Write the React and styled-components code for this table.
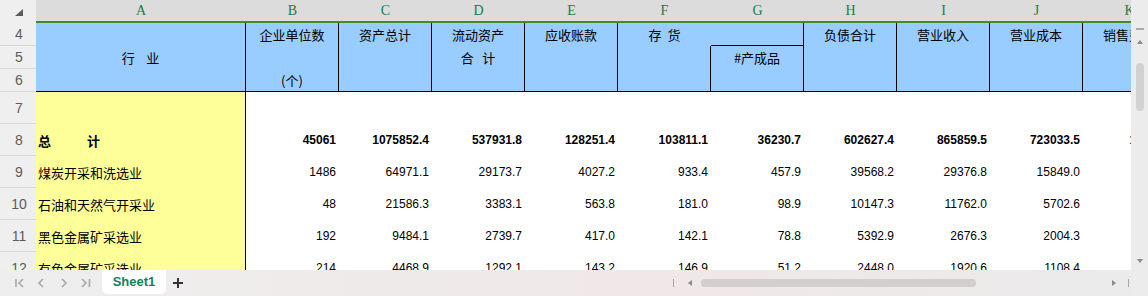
import styled, { createGlobalStyle } from "styled-components";

const GlobalStyle = createGlobalStyle`
  html, body {
    margin: 0;
    padding: 0;
  }
  body {
    background: #fff;
    font-family: "Liberation Sans", "Noto Sans CJK SC", sans-serif;
  }
`;

const LETTERS = ["A", "B", "C", "D", "E", "F", "G", "H", "I", "J", "K"];

// 表头：每个合并单元格按三行文字排列
const HEADS_LEFT = [
  ["企业单位数", "", "(个)"],
  ["资产总计", "", ""],
  ["流动资产", "合   计", ""],
  ["应收账款", "", ""],
];
const HEADS_RIGHT = [
  ["负债合计", "", ""],
  ["营业收入", "", ""],
  ["营业成本", "", ""],
  ["销售费用", "", ""],
];

const ROWS = [
  { n: 7, name: "", values: [] },
  {
    n: 8,
    name: "总          计",
    bold: true,
    values: ["45061", "1075852.4", "537931.8", "128251.4", "103811.1", "36230.7", "602627.4", "865859.5", "723033.5", "16485.2"],
  },
  {
    n: 9,
    name: "煤炭开采和洗选业",
    values: ["1486", "64971.1", "29173.7", "4027.2", "933.4", "457.9", "39568.2", "29376.8", "15849.0", "1532.6"],
  },
  {
    n: 10,
    name: "石油和天然气开采业",
    values: ["48", "21586.3", "3383.1", "563.8", "181.0", "98.9", "10147.3", "11762.0", "5702.6", "205.4"],
  },
  {
    n: 11,
    name: "黑色金属矿采选业",
    values: ["192", "9484.1", "2739.7", "417.0", "142.1", "78.8", "5392.9", "2676.3", "2004.3", "61.7"],
  },
  {
    n: 12,
    name: "有色金属矿采选业",
    values: ["214", "4468.9", "1292.1", "143.2", "146.9", "51.2", "2448.0", "1920.6", "1108.4", "58.3"],
  },
];

const HeadStack = ({ lines }) => (
  <>
    {lines.map((t, i) => (
      <HeadLine key={i}>{t}</HeadLine>
    ))}
  </>
);

const App = () => {
  return (
    <>
      <GlobalStyle />
      <Window>
        <Main>
          <Sheet>
            <Grid>
              <Corner>
                <svg width="8" height="7" viewBox="0 0 8 7">
                  <polygon points="8,0 8,7 0,7" fill="#5a5a5a" />
                </svg>
              </Corner>
              {LETTERS.map((l) => (
                <ColHead key={l}>{l}</ColHead>
              ))}

              <RowNum>4</RowNum>
              <HeadCell $span={3} $center>
                {"行    业"}
              </HeadCell>
              {HEADS_LEFT.map((lines, i) => (
                <HeadCell key={i} $span={3}>
                  <HeadStack lines={lines} />
                </HeadCell>
              ))}
              <HeadCell $span={3} $noRight>
                <HeadStack lines={["存  货", "", ""]} />
              </HeadCell>
              <HeadCell $span={1} />
              {HEADS_RIGHT.map((lines, i) => (
                <HeadCell key={i} $span={3}>
                  <HeadStack lines={lines} />
                </HeadCell>
              ))}
              <RowNum>5</RowNum>
              <HeadCell $span={2} $left>
                <HeadStack lines={["#产成品", ""]} />
              </HeadCell>
              <RowNum>6</RowNum>

              {ROWS.map((row) => (
                <Row key={row.n} row={row} />
              ))}
            </Grid>
          </Sheet>
          <VScroll>
            <Dash />
            <svg width="6" height="4" viewBox="0 0 6 4" style={{ marginTop: 10 }}>
              <polygon points="3,0 6,4 0,4" fill="#8a8a8a" />
            </svg>
            <VThumb />
            <svg width="6" height="4" viewBox="0 0 6 4" style={{ marginTop: "auto" }}>
              <polygon points="0,0 6,0 3,4" fill="#8a8a8a" />
            </svg>
          </VScroll>
        </Main>

        <Bar>
          <Nav>
            <NavIcon viewBox="0 0 10 10">
              <line x1="1" y1="1" x2="1" y2="9" />
              <polyline points="8,1 4,5 8,9" />
            </NavIcon>
            <NavIcon viewBox="0 0 10 10">
              <polyline points="6,1 2,5 6,9" />
            </NavIcon>
            <NavIcon viewBox="0 0 10 10">
              <polyline points="3,1 7,5 3,9" />
            </NavIcon>
            <NavIcon viewBox="0 0 10 10">
              <polyline points="1,1 5,5 1,9" />
              <line x1="8.5" y1="1" x2="8.5" y2="9" />
            </NavIcon>
          </Nav>
          <Tab>Sheet1</Tab>
          <Plus viewBox="0 0 10 10">
            <path d="M5 0v10M0 5h10" />
          </Plus>
          <HScroll>
            <Tick />
            <svg width="4" height="6" viewBox="0 0 4 6" style={{ marginLeft: 14 }}>
              <polygon points="4,0 4,6 0,3" fill="#8a8a8a" />
            </svg>
            <HThumb />
            <svg width="4" height="6" viewBox="0 0 4 6" style={{ marginLeft: "auto" }}>
              <polygon points="0,0 4,3 0,6" fill="#8a8a8a" />
            </svg>
            <Tick style={{ marginLeft: 12 }} />
          </HScroll>
          <BarCorner />
        </Bar>
      </Window>
    </>
  );
};

const Row = ({ row }) => (
  <>
    <RowNum>{row.n}</RowNum>
    <LabelCell $bold={row.bold}>{row.name}</LabelCell>
    {LETTERS.slice(1).map((l, i) => (
      <NumCell key={l} $bold={row.bold}>
        {row.values[i] || ""}
      </NumCell>
    ))}
  </>
);

const Window = styled.div`
  width: 1148px;
  height: 296px;
  display: flex;
  flex-direction: column;
  overflow: hidden;
`;

const Main = styled.div`
  display: flex;
  height: 270px;
`;

const Sheet = styled.div`
  flex: 1;
  overflow: hidden;
`;

const Grid = styled.div`
  display: grid;
  width: max-content;
  grid-template-columns: 36px 210px repeat(10, 93px);
  grid-template-rows: 23px repeat(3, 23px) repeat(6, 32px);
`;

const Corner = styled.div`
  background: #efefef;
  display: flex;
  align-items: flex-start;
  padding: 9px 0 0 15px;
`;

const ColHead = styled.div`
  background: #dcdcdc;
  border-bottom: 2px solid #3e8e25;
  color: #1e7b45;
  font-family: "Liberation Serif", serif;
  font-size: 14px;
  line-height: 21px;
  text-align: center;
`;

const RowNum = styled.div`
  background: #efefef;
  border-bottom: 1px solid #d7d7d7;
  color: #5c5c5c;
  font-family: "Liberation Sans", sans-serif;
  font-size: 14px;
  display: flex;
  align-items: center;
  justify-content: center;
  padding-left: 2px;
`;

const HeadCell = styled.div`
  grid-row: span ${({ $span }) => $span};
  background: #99ccff;
  border-right: ${({ $noRight }) => ($noRight ? "none" : "1px solid #000")};
  border-left: ${({ $left }) => ($left ? "1px solid #000" : "none")};
  border-bottom: 1px solid #000;
  margin-left: ${({ $left }) => ($left ? "-1px" : "0")};
  font-family: "Noto Sans CJK SC", sans-serif;
  font-size: 13px;
  color: #000;
  white-space: pre;
  display: flex;
  flex-direction: column;
  align-items: ${({ $center }) => ($center ? "center" : "stretch")};
  justify-content: ${({ $center }) => ($center ? "center" : "flex-start")};
  overflow: hidden;
`;

const HeadLine = styled.div`
  height: 23px;
  line-height: 23px;
  text-align: center;
  flex-shrink: 0;
`;

const LabelCell = styled.div`
  background: #ffff99;
  border-right: 1px solid #000;
  padding-left: 2px;
  font-family: "Liberation Sans", "Noto Sans CJK SC", sans-serif;
  font-size: 13px;
  font-weight: ${({ $bold }) => ($bold ? 700 : 400)};
  color: #000;
  white-space: pre;
  display: flex;
  align-items: center;
`;

const NumCell = styled.div`
  background: #fff;
  padding-right: 3px;
  font-family: "Liberation Sans", sans-serif;
  font-size: 12px;
  font-weight: ${({ $bold }) => ($bold ? 700 : 400)};
  color: #000;
  display: flex;
  align-items: center;
  justify-content: flex-end;
`;

const VScroll = styled.div`
  width: 17px;
  background: #ececec;
  display: flex;
  flex-direction: column;
  align-items: center;
  padding: 28px 0 7px;
  box-sizing: border-box;
`;

const Dash = styled.div`
  width: 8px;
  height: 2px;
  background: #a9a9a9;
`;

const VThumb = styled.div`
  width: 8px;
  height: 48px;
  margin-top: 19px;
  border-radius: 4px;
  background: #d2d2d2;
`;

const Bar = styled.div`
  height: 26px;
  display: flex;
  align-items: center;
  background: linear-gradient(90deg, #eeeeee 0%, #efeaea 35%, #f0e7e7 60%, #eaebeb 100%);
`;

const Nav = styled.div`
  display: flex;
  gap: 12px;
  padding-left: 15px;
`;

const NavIcon = styled.svg`
  width: 10px;
  height: 10px;
  fill: none;
  stroke: #a8a8a8;
  stroke-width: 1.6;
`;

const Tab = styled.div`
  align-self: flex-start;
  margin-left: 11px;
  width: 64px;
  height: 24px;
  background: #fff;
  border-radius: 0 0 5px 5px;
  color: #15805d;
  font-family: "Liberation Sans", sans-serif;
  font-size: 13px;
  font-weight: 700;
  line-height: 24px;
  text-align: center;
`;

const Plus = styled.svg`
  width: 10px;
  height: 10px;
  margin-left: 7px;
  stroke: #333;
  stroke-width: 2;
`;

const HScroll = styled.div`
  margin-left: auto;
  width: 458px;
  display: flex;
  align-items: center;
  padding-right: 2px;
  box-sizing: border-box;
`;

const Tick = styled.div`
  width: 1px;
  height: 8px;
  background: #a6a6a6;
`;

const HThumb = styled.div`
  width: 275px;
  height: 8px;
  margin-left: 9px;
  border-radius: 4px;
  background: #d3cece;
`;

const BarCorner = styled.div`
  width: 17px;
  height: 100%;
  background: #ececec;
`;

export default App;
